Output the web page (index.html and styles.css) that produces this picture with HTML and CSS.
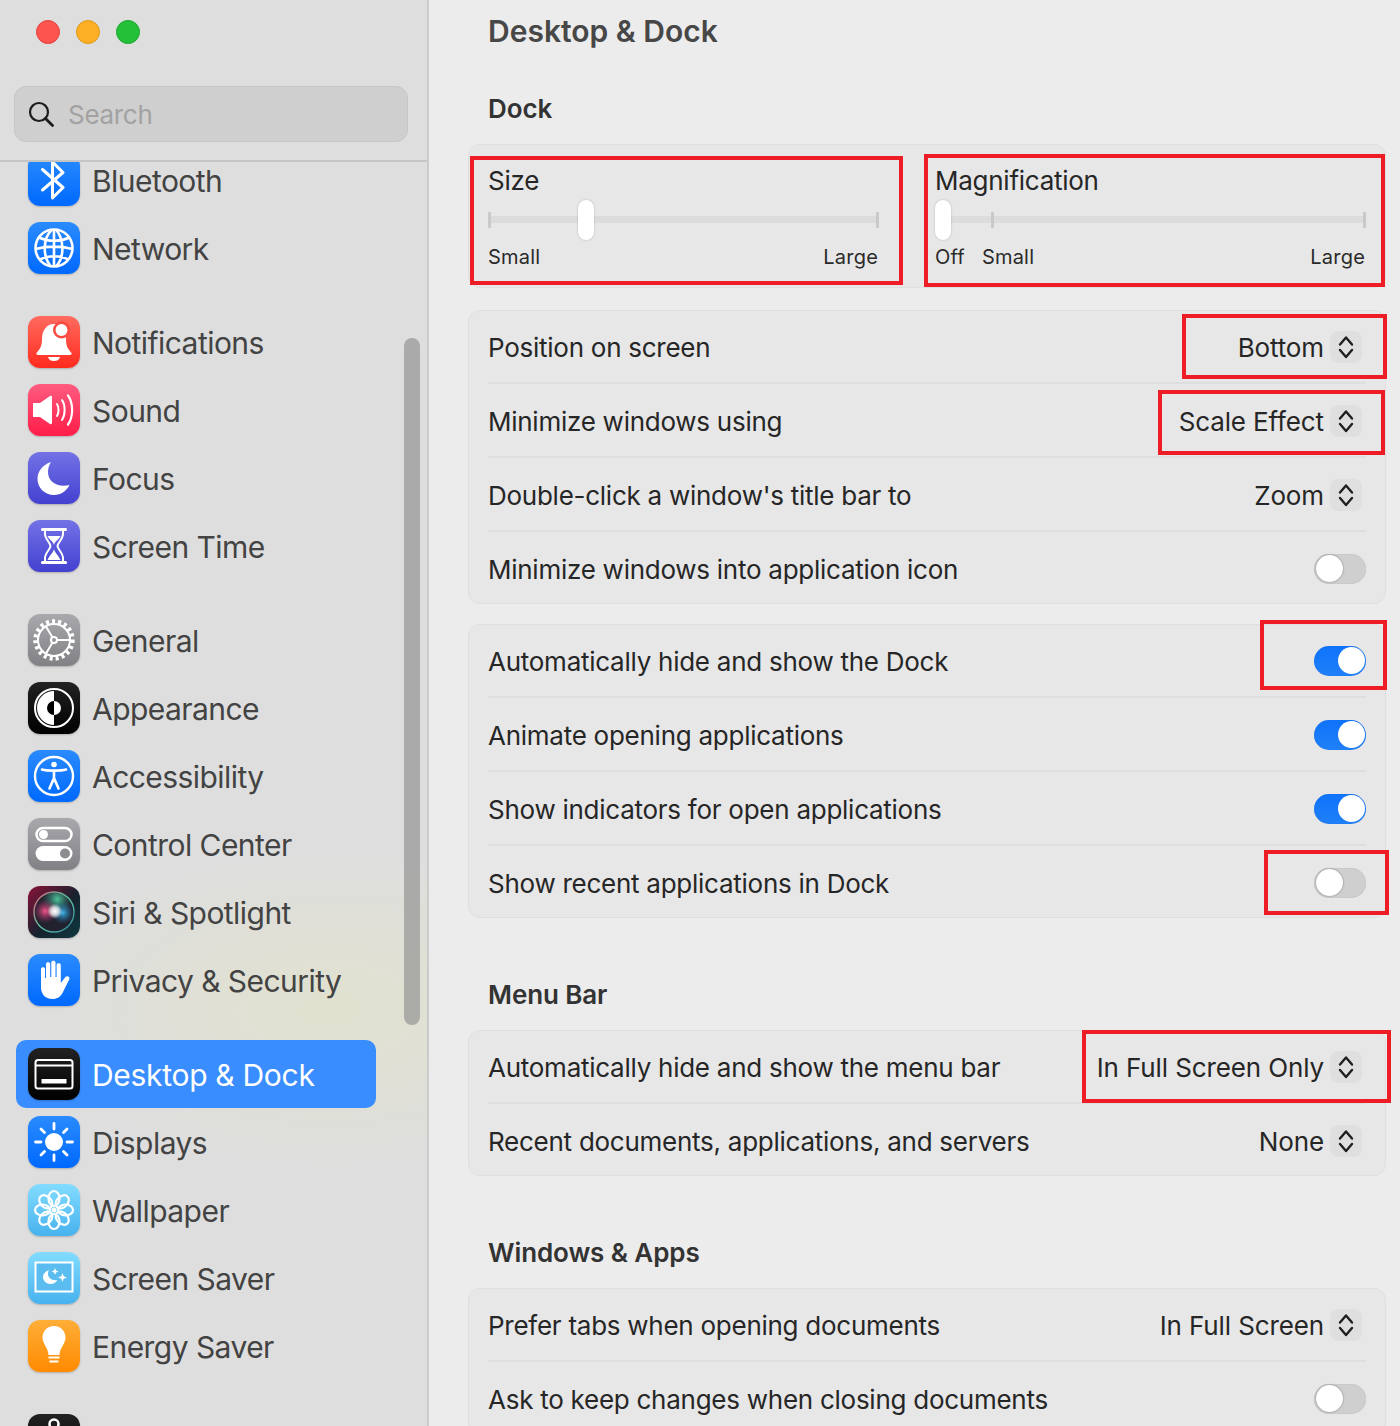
FILE: index.html
```html
<!DOCTYPE html>
<html lang="en">
<head>
<meta charset="utf-8">
<title>Desktop &amp; Dock</title>
<link rel="stylesheet" href="styles.css">
</head>
<body>
<div class="window">
  <aside class="sidebar">
    <div class="lights"><span class="light red"></span><span class="light amber"></span><span class="light green"></span></div>
    <div class="search">
      <svg class="search-icon" viewBox="0 0 26 26"><circle cx="11" cy="11" r="9" fill="none" stroke="#1c1c1c" stroke-width="2.2"/><path d="M17.5 17.5L24.5 24.5" stroke="#1c1c1c" stroke-width="2.8" stroke-linecap="round"/></svg>
      <span class="search-text">Search</span>
    </div>
    <div class="scroller">
      <div class="scrollbar"></div>
      <nav class="list">
        <div class="group">
          <div class="item"><span class="icon blue"><svg viewBox="0 0 52 52"><path d="M14.5 15.5L35 33.5 24.5 44V8L35 18.5 14.5 36" fill="none" stroke="#fff" stroke-width="3" stroke-linejoin="round" stroke-linecap="round"/></svg></span>Bluetooth</div>
          <div class="item"><span class="icon blue"><svg viewBox="0 0 52 52"><g fill="none" stroke="#fff" stroke-width="2.6"><circle cx="26" cy="26" r="18.5"/><path d="M24 7.5C15 16 14 34 23 44.5M28 7.5C36 17 37 35 28 44.5M26 8V44M10 15C20 20 33 20 42 15M7.5 27C19 24 33 24 44.5 27M11 38C20 33 33 33 41 38"/></g></svg></span>Network</div>
        </div>
        <div class="group">
          <div class="item"><span class="icon red-i"><svg viewBox="0 0 52 52"><path d="M8.5 37C12 33 14 30 14 23 14 14 19 8 26 8 33 8 38 14 38 23 38 30 40 33 43.5 37 44 38 43 39 42 39H10C9 39 8 38 8.5 37Z" fill="#fff"/><path d="M20 41H32C31 44 29 45 26 45 23 45 21 44 20 41Z" fill="#fff"/><circle cx="33.5" cy="14" r="8.5" fill="#fb4a3f"/><circle cx="33.5" cy="14" r="6" fill="#fff"/></svg></span>Notifications</div>
          <div class="item"><span class="icon pink"><svg viewBox="0 0 52 52"><path d="M5 19H12L22 12C23 11.500 24 12 24 13V39C24 40 23 40.500 22 40L12 33H5C5 33 5 19 5 19Z" fill="#fff"/><g fill="none" stroke="#fff" stroke-linecap="round"><path d="M29 20C31 23 31 29 29 32" stroke-width="2"/><path d="M34 16C37.500 21 37.500 31 34 36" stroke-width="2"/><path d="M40 11.500C45.500 19 45.500 33 40 40.500" stroke-width="2.200"/></g></svg></span>Sound</div>
          <div class="item"><span class="icon indigo"><svg viewBox="0 0 52 52"><path d="M23 10C14 13 9.500 20 9.500 27 9.500 36 17 43 26 43 33 43 38.500 39 41.500 33 30 36 20 30 20 20 20 16 21 13 23 10Z" fill="#fff"/></svg></span>Focus</div>
          <div class="item"><span class="icon indigo"><svg viewBox="0 0 52 52"><path d="M17 10H35V14C35 19 29.500 23 29.500 26 29.500 29 35 33 35 38V42H17V38C17 33 22.500 29 22.500 26 22.500 23 17 19 17 14Z" fill="none" stroke="#fff" stroke-width="2"/><path d="M14.500 9.500H37.500M14.500 42.500H37.500" stroke="#fff" stroke-width="3.200" stroke-linecap="round"/><path d="M19.500 16H32.500C31 19.500 26.500 21.500 26 25 25.500 21.500 21 19.500 19.500 16ZM26 29C26.500 32.500 30.500 35 32.500 40H19.500C21.500 35 25.500 32.500 26 29Z" fill="#fff"/></svg></span>Screen Time</div>
        </div>
        <div class="group">
          <div class="item"><span class="icon gray"><svg viewBox="0 0 52 52"><g fill="none" stroke="#fff"><circle cx="26" cy="26" r="18.500" stroke-width="4.500" stroke-dasharray="3 3.050"/><circle cx="26" cy="26" r="16" stroke-width="2"/><circle cx="26" cy="26" r="3" stroke-width="2"/><path d="M29 26H42M24.500 23.500L18 12.500M24.500 28.500L18 39.500" stroke-width="2"/></g></svg></span>General</div>
          <div class="item"><span class="icon black"><svg viewBox="0 0 52 52"><circle cx="26" cy="26" r="19" fill="none" stroke="#fff" stroke-width="2"/><path d="M26 9A17 17 0 0 0 26 43Z" fill="#fff"/><path d="M26 19A7 7 0 0 0 26 33Z" fill="#000"/><path d="M26 19A7 7 0 0 1 26 33Z" fill="#fff"/></svg></span>Appearance</div>
          <div class="item"><span class="icon blue"><svg viewBox="0 0 52 52"><circle cx="26" cy="26" r="19" fill="none" stroke="#fff" stroke-width="2.400"/><circle cx="26" cy="14.500" r="2.800" fill="#fff"/><path d="M14 19.500C19 21 33 21 38 19.500M26 21V29M26 28L21.500 38.500M26 28L30.500 38.500" fill="none" stroke="#fff" stroke-width="2.600" stroke-linecap="round"/></svg></span>Accessibility</div>
          <div class="item"><span class="icon gray"><svg viewBox="0 0 52 52"><rect x="8.500" y="10" width="35" height="13" rx="6.500" fill="none" stroke="#fff" stroke-width="2.500"/><circle cx="15.500" cy="16.500" r="4.500" fill="#fff"/><rect x="7.500" y="28" width="37" height="15" rx="7.500" fill="#fff"/><circle cx="37" cy="35.500" r="5" fill="#8b8b90"/></svg></span>Control Center</div>
          <div class="item"><span class="icon siri"><svg viewBox="0 0 52 52"><defs><radialGradient id="s1" cx="28%" cy="48%" r="30%"><stop offset="0" stop-color="#f0558c"/><stop offset="1" stop-color="#a02a60" stop-opacity="0"/></radialGradient><radialGradient id="s2" cx="72%" cy="52%" r="28%"><stop offset="0" stop-color="#3fb4ec"/><stop offset="1" stop-color="#1a6a9a" stop-opacity="0"/></radialGradient><radialGradient id="s3" cx="52%" cy="48%" r="19%"><stop offset="0" stop-color="#fff"/><stop offset=".5" stop-color="#fff" stop-opacity=".75"/><stop offset="1" stop-color="#fff" stop-opacity="0"/></radialGradient><radialGradient id="s5" cx="58%" cy="18%" r="38%"><stop offset="0" stop-color="#4fc49a"/><stop offset="1" stop-color="#2a7a6a" stop-opacity="0"/></radialGradient><linearGradient id="s4" x1="0" y1="0" x2="1" y2="1"><stop offset="0" stop-color="#f05a80"/><stop offset=".5" stop-color="#5fc8a0"/><stop offset="1" stop-color="#2f7f9a"/></linearGradient></defs><circle cx="26" cy="26" r="20" fill="#22222f" stroke="url(#s4)" stroke-width="1.400"/><circle cx="26" cy="26" r="20" fill="url(#s5)"/><circle cx="26" cy="26" r="20" fill="url(#s1)"/><circle cx="26" cy="26" r="20" fill="url(#s2)"/><circle cx="26" cy="26" r="20" fill="url(#s3)"/></svg></span>Siri &amp; Spotlight</div>
          <div class="item"><span class="icon blue"><svg viewBox="0 0 52 52"><path d="M13 26V15C13 12.500 17 12.500 17 15V24H18V10C18 7.500 22.200 7.500 22.200 10V23H23.300V8.500C23.300 6 27.500 6 27.500 8.500V23H28.600V11C28.600 8.500 32.800 8.500 32.800 11V29L37 23.500C39 21 42.500 23 41.200 25.500L35 38C32.500 43 29 45 24.500 45 17 45 13 40 13 33Z" fill="#fff"/></svg></span>Privacy &amp; Security</div>
        </div>
        <div class="group">
          <div class="item selected"><span class="icon black"><svg viewBox="0 0 52 52"><rect x="7.500" y="12" width="37" height="28.500" rx="2.500" fill="none" stroke="#fff" stroke-width="2"/><path d="M8 17.500H44" stroke="#fff" stroke-width="2"/><rect x="13.500" y="31" width="25" height="4.500" fill="#fff"/></svg></span>Desktop &amp; Dock</div>
          <div class="item"><span class="icon blue"><svg viewBox="0 0 52 52"><circle cx="26" cy="26" r="9" fill="#fff"/><path d="M26 7.500V13M26 39V44.500M7.500 26H13M39 26H44.500M13 13L16.500 16.500M35.500 35.500L39 39M13 39L16.500 35.500M35.500 16.500L39 13" stroke="#fff" stroke-width="2.800" stroke-linecap="round"/></svg></span>Displays</div>
          <div class="item"><span class="icon sky"><svg viewBox="0 0 52 52"><g fill="none" stroke="#fff" stroke-width="2.200"><ellipse cx="26" cy="14.500" rx="5.500" ry="7.500"/><ellipse cx="26" cy="37.500" rx="5.500" ry="7.500"/><ellipse cx="14.500" cy="26" rx="7.500" ry="5.500"/><ellipse cx="37.500" cy="26" rx="7.500" ry="5.500"/><ellipse cx="17.800" cy="17.800" rx="5.500" ry="7.500" transform="rotate(-45 17.800 17.800)"/><ellipse cx="34.200" cy="17.800" rx="5.500" ry="7.500" transform="rotate(45 34.200 17.800)"/><ellipse cx="17.800" cy="34.200" rx="5.500" ry="7.500" transform="rotate(45 17.800 34.200)"/><ellipse cx="34.200" cy="34.200" rx="5.500" ry="7.500" transform="rotate(-45 34.200 34.200)"/></g><circle cx="26" cy="26" r="2.500" fill="#fff"/></svg></span>Wallpaper</div>
          <div class="item"><span class="icon sky"><svg viewBox="0 0 52 52"><rect x="7.500" y="10.500" width="37" height="29" fill="#5bbcef" stroke="#fff" stroke-width="2"/><path d="M21 18C17 19.500 15 22 15 25 15 29 18.500 32 22.500 32 25.500 32 28 30.500 29.500 28 24.500 29 20 26 20 22 20 20.500 20.300 19 21 18Z" fill="#fff"/><path d="M27 16L28 18.500 30.500 19.500 28 20.500 27 23 26 20.500 23.500 19.500 26 18.500ZM34.500 21L35.700 24.300 39 25.500 35.700 26.700 34.500 30 33.300 26.700 30 25.500 33.300 24.300Z" fill="#fff"/></svg></span>Screen Saver</div>
          <div class="item"><span class="icon orange"><svg viewBox="0 0 52 52"><path d="M26 6C33 6 37.500 11.500 37.500 17.500 37.500 24 32 27 31.500 35H20.500C20 27 14.500 24 14.500 17.500 14.500 11.500 19 6 26 6Z" fill="#fff"/><path d="M20.500 37.500H31.500M21.500 41.500H30.500" stroke="#fff" stroke-width="2"/></svg></span>Energy Saver</div>
        </div>
        <div class="group">
          <div class="item"><span class="icon black"><svg viewBox="0 0 52 52"><circle cx="26" cy="10" r="4.500" fill="none" stroke="#fff" stroke-width="2.500"/></svg></span></div>
        </div>
      </nav>
    </div>
  </aside>

  <main class="content">
    <h1 class="title">Desktop &amp; Dock</h1>
    <h2 class="section-first">Dock</h2>
    <section class="card sliders">
      <div class="slider size">
        <div class="slider-label">Size</div>
        <div class="track"><i class="tick tick-start"></i><i class="tick tick-end"></i><b class="thumb thumb-size"></b></div>
        <div class="scale"><span>Small</span><span>Large</span></div>
      </div>
      <div class="slider mag">
        <div class="slider-label">Magnification</div>
        <div class="track"><i class="tick tick-small"></i><i class="tick tick-end"></i><b class="thumb thumb-off"></b></div>
        <div class="scale"><span class="off">Off</span><span>Small</span><span class="push">Large</span></div>
      </div>
    </section>

    <section class="card gap-22">
      <div class="row"><span class="label">Position on screen</span><span class="popup">Bottom<svg class="stepper" viewBox="0 0 32 32"><path d="M10 13.500L16 6.500 22 13.500M10 19L16 26 22 19" fill="none" stroke="#1f1f1f" stroke-width="2.400" stroke-linecap="round" stroke-linejoin="round"/></svg></span></div>
      <div class="row"><span class="label">Minimize windows using</span><span class="popup">Scale Effect<svg class="stepper" viewBox="0 0 32 32"><path d="M10 13.500L16 6.500 22 13.500M10 19L16 26 22 19" fill="none" stroke="#1f1f1f" stroke-width="2.400" stroke-linecap="round" stroke-linejoin="round"/></svg></span></div>
      <div class="row"><span class="label">Double-click a window's title bar to</span><span class="popup">Zoom<svg class="stepper" viewBox="0 0 32 32"><path d="M10 13.500L16 6.500 22 13.500M10 19L16 26 22 19" fill="none" stroke="#1f1f1f" stroke-width="2.400" stroke-linecap="round" stroke-linejoin="round"/></svg></span></div>
      <div class="row"><span class="label">Minimize windows into application icon</span><span class="toggle"></span></div>
    </section>

    <section class="card gap-20">
      <div class="row"><span class="label">Automatically hide and show the Dock</span><span class="toggle on"></span></div>
      <div class="row"><span class="label">Animate opening applications</span><span class="toggle on"></span></div>
      <div class="row"><span class="label">Show indicators for open applications</span><span class="toggle on"></span></div>
      <div class="row"><span class="label">Show recent applications in Dock</span><span class="toggle"></span></div>
    </section>

    <h2 class="section">Menu Bar</h2>
    <section class="card">
      <div class="row"><span class="label">Automatically hide and show the menu bar</span><span class="popup">In Full Screen Only<svg class="stepper" viewBox="0 0 32 32"><path d="M10 13.500L16 6.500 22 13.500M10 19L16 26 22 19" fill="none" stroke="#1f1f1f" stroke-width="2.400" stroke-linecap="round" stroke-linejoin="round"/></svg></span></div>
      <div class="row"><span class="label">Recent documents, applications, and servers</span><span class="popup">None<svg class="stepper" viewBox="0 0 32 32"><path d="M10 13.500L16 6.500 22 13.500M10 19L16 26 22 19" fill="none" stroke="#1f1f1f" stroke-width="2.400" stroke-linecap="round" stroke-linejoin="round"/></svg></span></div>
    </section>

    <h2 class="section">Windows &amp; Apps</h2>
    <section class="card">
      <div class="row"><span class="label">Prefer tabs when opening documents</span><span class="popup">In Full Screen<svg class="stepper" viewBox="0 0 32 32"><path d="M10 13.500L16 6.500 22 13.500M10 19L16 26 22 19" fill="none" stroke="#1f1f1f" stroke-width="2.400" stroke-linecap="round" stroke-linejoin="round"/></svg></span></div>
      <div class="row"><span class="label">Ask to keep changes when closing documents</span><span class="toggle"></span></div>
    </section>
  </main>

  <div class="mark mark-size"></div>
  <div class="mark mark-mag"></div>
  <div class="mark mark-bottom"></div>
  <div class="mark mark-scale"></div>
  <div class="mark mark-hide"></div>
  <div class="mark mark-recent"></div>
  <div class="mark mark-menubar"></div>
</div>
</body>
</html>
```

FILE: styles.css
```css
* { box-sizing: border-box; }
html, body { margin: 0; height: 100%; overflow: hidden; }
body { font-family: Inter, "Liberation Sans", sans-serif; background: #ececec; }

.window { position: relative; display: flex; width: 1400px; height: 1426px; overflow: hidden; }

/* Sidebar */
.sidebar {
  width: 429px; flex: none; display: flex; flex-direction: column;
  border-right: 2px solid #cbcbcb;
  background: radial-gradient(ellipse 300px 160px at 330px 1010px, #e1e1cf 0%, #dedede 100%), #dedede;
}
.lights { display: flex; gap: 16px; padding: 20px 0 0 36px; height: 86px; }
.light { width: 24px; height: 24px; border-radius: 50%; border: 1px solid; }
.red { background: #fd5450; border-color: #e2413d; }
.amber { background: #fdb024; border-color: #dd971b; }
.green { background: #24c138; border-color: #1ca72e; }

.search {
  margin-left: 14px; width: 394px; height: 56px; flex: none; display: flex; align-items: center;
  padding-left: 13px; gap: 14px; border-radius: 12px; background: #cfcfcf; border: 1px solid #c6c6c6;
}
.search-icon { width: 26px; height: 26px; flex: none; }
.search-text { font-size: 26px; color: #a2a2a2; letter-spacing: -.3px; }

.scroller {
  position: relative; flex: 1; min-height: 0; margin-top: 18px; overflow: hidden;
  border-top: 2px solid #c5c5c5;
}
.scrollbar {
  position: absolute; left: 404px; top: 176px; width: 16px; height: 687px;
  border-radius: 8px; background: rgba(150,150,150,.72);
}
.list { margin-top: -16px; display: flex; flex-direction: column; gap: 26px; }
.item {
  display: flex; align-items: center; gap: 12px; width: 360px; height: 68px; margin-left: 16px;
  padding: 1px 0 0 12px; font-size: 30px; color: #434343; border-radius: 10px; letter-spacing: -.55px;
}
.selected { background: #3a8dfe; color: #fff; letter-spacing: -.3px; }
.icon {
  width: 52px; height: 52px; flex: none; border-radius: 12px; display: block; margin-top: -1px;
  box-shadow: 0 1px 2px rgba(0,0,0,.22);
}
.icon svg { display: block; width: 52px; height: 52px; }
.blue { background: linear-gradient(#2a8bfd, #0069fe); }
.red-i { background: linear-gradient(#ff6b5f, #ff2b1e); }
.pink { background: linear-gradient(#ff5c80, #ff1c48); }
.indigo { background: linear-gradient(#7472e6, #4341d0); }
.gray { background: linear-gradient(#a9a9ad, #808085); }
.black { background: linear-gradient(#222, #000); }
.sky { background: linear-gradient(#83dcff, #47b2ee); }
.orange { background: linear-gradient(#ffae38, #ff8a00); }
.siri { background: linear-gradient(135deg, #8a1238, #16222e 55%, #0e3a40); }

/* Content */
.content { flex: 1; min-width: 0; padding: 0 14px 0 39px; color: #222; }
.title { margin: 0; height: 62px; line-height: 62px; font-size: 30px; font-weight: 600; color: #474747; padding-left: 20px; }
h2 { margin: 0; padding-left: 20px; font-size: 26px; font-weight: 600; color: #333; letter-spacing: -.1px; }
.section-first { height: 82px; padding-top: 29px; line-height: 36px; }
.section { height: 112px; padding-top: 58px; line-height: 38px; }

.card { background: #e7e7e7; border: 1px solid #dfdfdf; border-radius: 12px; }
.gap-22 { margin-top: 22px; }
.gap-20 { margin-top: 20px; }

.row {
  position: relative; display: flex; align-items: center; justify-content: space-between;
  height: 71px; margin: 0 19px; font-size: 26px; color: #262626; letter-spacing: -.26px;
}
.row + .row { margin-top: 3px; }
.row + .row::before {
  content: ""; position: absolute; left: 0; right: 0; top: -3px; height: 2px; background: #dedede;
}
.row:last-child { margin-bottom: -1px; }
.label { padding-top: 1px; }

.popup { display: flex; align-items: center; gap: 6px; margin-right: 4px; padding-top: 1px; letter-spacing: -.12px; }
.stepper { width: 32px; height: 32px; flex: none; margin-top: -1px; border-radius: 8px; background: #dfdfdf; }

.toggle { position: relative; width: 52px; height: 30px; border-radius: 15px; background: #cfcfcf; box-shadow: inset 0 0 1px rgba(0,0,0,.2); }
.toggle::after {
  content: ""; position: absolute; left: 2px; top: 1.500px; width: 27px; height: 27px; border-radius: 50%;
  background: #fff; box-shadow: 0 0 2px rgba(0,0,0,.45);
}
.toggle.on { background: linear-gradient(#0f73fb, #2080f8); }
.toggle.on::after { left: 24px; box-shadow: none; }

/* Sliders */
.sliders { display: flex; gap: 56px; height: 144px; padding: 0 19px; }
.size { width: 391px; }
.mag { flex: 1; }
.slider-label { padding-top: 18px; height: 54px; line-height: 36px; font-size: 26px; color: #262626; letter-spacing: -.26px; }
.track { position: relative; height: 7px; margin-top: 17px; background: #dcdcdc; }
.tick { position: absolute; top: -4px; width: 3px; height: 16px; border-radius: 1px; background: #c9c9c9; }
.tick-start { left: 0; }
.tick-end { right: 0; }
.tick-small { left: 56px; }
.thumb { position: absolute; top: -16px; width: 16px; height: 40px; border-radius: 8px; background: #fff; box-shadow: 0 0 2px rgba(0,0,0,.25); }
.thumb-size { left: 90px; }
.thumb-off { left: 0; }
.scale { display: flex; justify-content: space-between; margin-top: 21px; padding-right: 1px; font-size: 20px; line-height: 26px; color: #2a2a2a; letter-spacing: .2px; }
.mag .scale { justify-content: flex-start; }
.off { margin-right: 17px; }
.push { margin-left: auto; }

/* Red annotation frames over the settings */
.mark { position: absolute; border: 4px solid #ee1c25; pointer-events: none; }
.mark-size { left: 470px; top: 156px; width: 433px; height: 129px; }
.mark-mag { left: 924px; top: 154px; width: 461px; height: 133px; }
.mark-bottom { left: 1182px; top: 314px; width: 205px; height: 65px; }
.mark-scale { left: 1158px; top: 390px; width: 227px; height: 65px; }
.mark-hide { left: 1260px; top: 620px; width: 127px; height: 70px; }
.mark-recent { left: 1264px; top: 850px; width: 125px; height: 65px; }
.mark-menubar { left: 1082px; top: 1030px; width: 309px; height: 73px; }
```
